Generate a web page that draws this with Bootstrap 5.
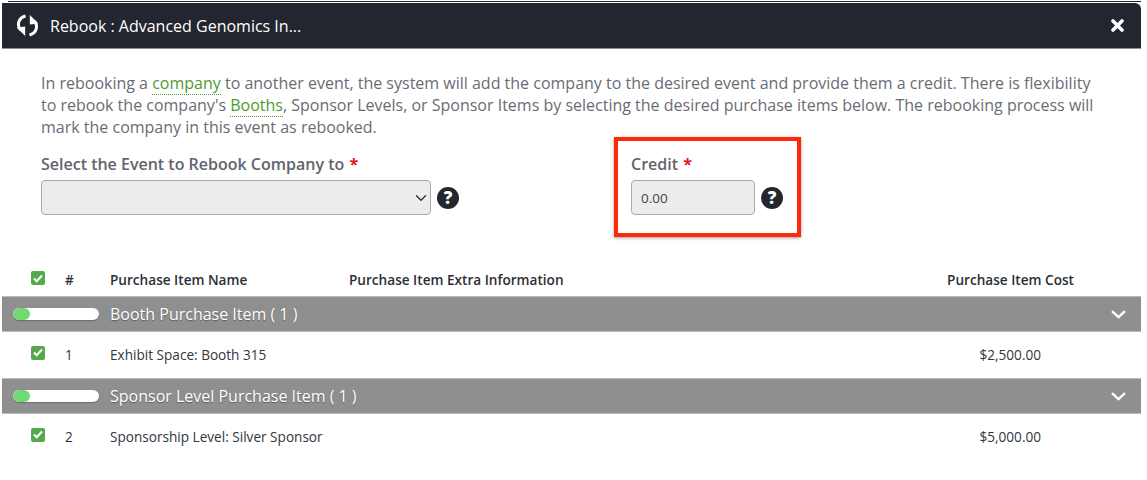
<!DOCTYPE html>
<html lang="en">
<head>
<meta charset="utf-8">
<title>Rebook</title>
<link href="https://cdn.jsdelivr.net/npm/bootstrap@5.3.0/dist/css/bootstrap.min.css" rel="stylesheet">
<style>
html,body{background:#fff;height:480px;overflow:hidden}
body{font-family:"Open Sans","Liberation Sans",sans-serif;color:#33353d;padding:1px 6px 0 2px}
.rb-top{height:1px;background:#222;margin:0 0 0 6px}
.rb-head{height:46px;margin-top:1px;background:#23252f;color:#fff;border-top-right-radius:6px;border-bottom:1px solid #8e8e96;padding:0 17px 0 13px}
.rb-title{font-size:16px;line-height:1;margin-left:10px}
.rb-intro{font-size:16px;line-height:22px;color:#6a6c74;padding:23px 40px 0 39px;margin:0}
.rb-intro a{color:#4f9a2e;text-decoration:none;border-bottom:1px dotted #4f9a2e}
.rb-form{padding-left:39px;height:127px}
.rb-left{width:573px;padding-top:15px}
.rb-label{font-size:16px;font-weight:600;color:#62646e;line-height:22px;margin-bottom:5px}
.rb-label b{color:#e4141c;font-weight:700;margin-left:1px}
.rb-select{width:390px;height:35px;background-color:#ececec;background-position:right 1px center;border:1px solid #aaa;border-radius:4px;font-size:14px}
.rb-help{width:22px;height:22px;border-radius:50%;background:#23252f;color:#fff;font-size:17px;font-weight:800;line-height:22px;text-align:center;margin-left:6px;flex:none}
.rb-credit{width:187px;height:100px;margin-top:-1px;border:4px solid #fb2a0c;box-shadow:0 1px 3px rgba(0,0,0,.4);padding:12px 0 0 13px}
.rb-input{width:124px;height:35px;background:#ececec;border:1px solid #aaa;border-radius:4px;font-size:13.5px;color:#44464e;padding:0 9px}
.rb-row{display:grid;grid-template-columns:34px 45px 239px 1fr auto;align-items:center;font-size:13.6px;padding-left:29px;color:#33353d}
.rb-thead{height:31px;font-weight:600;color:#2c2e36;padding-right:67px}
.rb-item{height:46px;padding-right:100px}
.rb-check{width:14px;height:14px;background:#54a94f;border-radius:2px;display:flex;align-items:center;justify-content:center;margin-top:-5px}
.rb-group{height:36px;background:#8f8f8f;border-top:1px solid #bbb;border-bottom:1px solid #bbb;color:#fff;font-size:16px;padding:0 15px 0 11px;text-shadow:0 1px 1px rgba(0,0,0,.35)}
.rb-toggle{width:86px;height:12px;background:#fff;border-radius:6px;margin-right:11px;overflow:hidden;box-shadow:0 1px 1px rgba(0,0,0,.25)}
.rb-knob{width:17px;height:12px;background:#72d873;border-radius:6px}
</style>
</head>
<body>
<div class="rb-top"></div>
<div class="rb-head d-flex align-items-center">
  <svg width="25" height="25" viewBox="0 0 25 25" fill="none" stroke="#fff" stroke-width="3" aria-hidden="true">
    <path d="M10.5 3C3.5 5 1.3 11.5 5.8 17"/><path d="M1.6 14.6l8.6-1v9.4z" fill="#fff" stroke="none"/>
    <path d="M14.5 22C21.5 20 23.7 13.5 19.2 8"/><path d="M23.4 10.4l-8.6 1V2z" fill="#fff" stroke="none"/>
  </svg>
  <span class="rb-title">Rebook : Advanced Genomics In...</span>
  <svg class="ms-auto" width="13" height="13" viewBox="0 0 13 13" stroke="#fff" stroke-width="3.6" stroke-linecap="round" aria-hidden="true"><path d="M2 2l9 9M11 2l-9 9"/></svg>
</div>
<p class="rb-intro">In rebooking a <a href="#">company</a> to another event, the system will add the company to the desired event and provide them a credit. There is flexibility to rebook the company's <a href="#">Booths</a>, Sponsor Levels, or Sponsor Items by selecting the desired purchase items below. The rebooking process will mark the company in this event as rebooked.</p>
<div class="rb-form d-flex">
  <div class="rb-left">
    <div class="rb-label">Select the Event to Rebook Company to <b>*</b></div>
    <div class="d-flex align-items-center">
      <select class="form-select rb-select"><option></option></select>
      <span class="rb-help">?</span>
    </div>
  </div>
  <div class="rb-credit">
    <div class="rb-label">Credit <b>*</b></div>
    <div class="d-flex align-items-center">
      <input class="form-control rb-input" value="0.00" readonly>
      <span class="rb-help">?</span>
    </div>
  </div>
</div>
<div class="rb-row rb-thead">
  <span class="rb-check"><svg width="10" height="9" viewBox="0 0 10 9" fill="none" stroke="#fff" stroke-width="2"><path d="M1 4.5l2.7 2.7L9 1.5"/></svg></span>
  <span>#</span><span>Purchase Item Name</span><span>Purchase Item Extra Information</span><span>Purchase Item Cost</span>
</div>
<div class="rb-group d-flex align-items-center">
  <div class="rb-toggle"><div class="rb-knob"></div></div>
  <span>Booth Purchase Item ( 1 )</span>
  <svg class="ms-auto" width="15" height="9" viewBox="0 0 15 9" fill="none" stroke="#fff" stroke-width="2.4"><path d="M1 1.2l6.5 6 6.5-6"/></svg>
</div>
<div class="rb-row rb-item">
  <span class="rb-check"><svg width="10" height="9" viewBox="0 0 10 9" fill="none" stroke="#fff" stroke-width="2"><path d="M1 4.5l2.7 2.7L9 1.5"/></svg></span>
  <span>1</span><span>Exhibit Space: Booth 315</span><span></span><span>$2,500.00</span>
</div>
<div class="rb-group d-flex align-items-center">
  <div class="rb-toggle"><div class="rb-knob"></div></div>
  <span>Sponsor Level Purchase Item ( 1 )</span>
  <svg class="ms-auto" width="15" height="9" viewBox="0 0 15 9" fill="none" stroke="#fff" stroke-width="2.4"><path d="M1 1.2l6.5 6 6.5-6"/></svg>
</div>
<div class="rb-row rb-item">
  <span class="rb-check"><svg width="10" height="9" viewBox="0 0 10 9" fill="none" stroke="#fff" stroke-width="2"><path d="M1 4.5l2.7 2.7L9 1.5"/></svg></span>
  <span>2</span><span>Sponsorship Level: Silver Sponsor</span><span></span><span>$5,000.00</span>
</div>
<script src="https://cdn.jsdelivr.net/npm/bootstrap@5.3.0/dist/js/bootstrap.bundle.min.js"></script>
</body>
</html>
